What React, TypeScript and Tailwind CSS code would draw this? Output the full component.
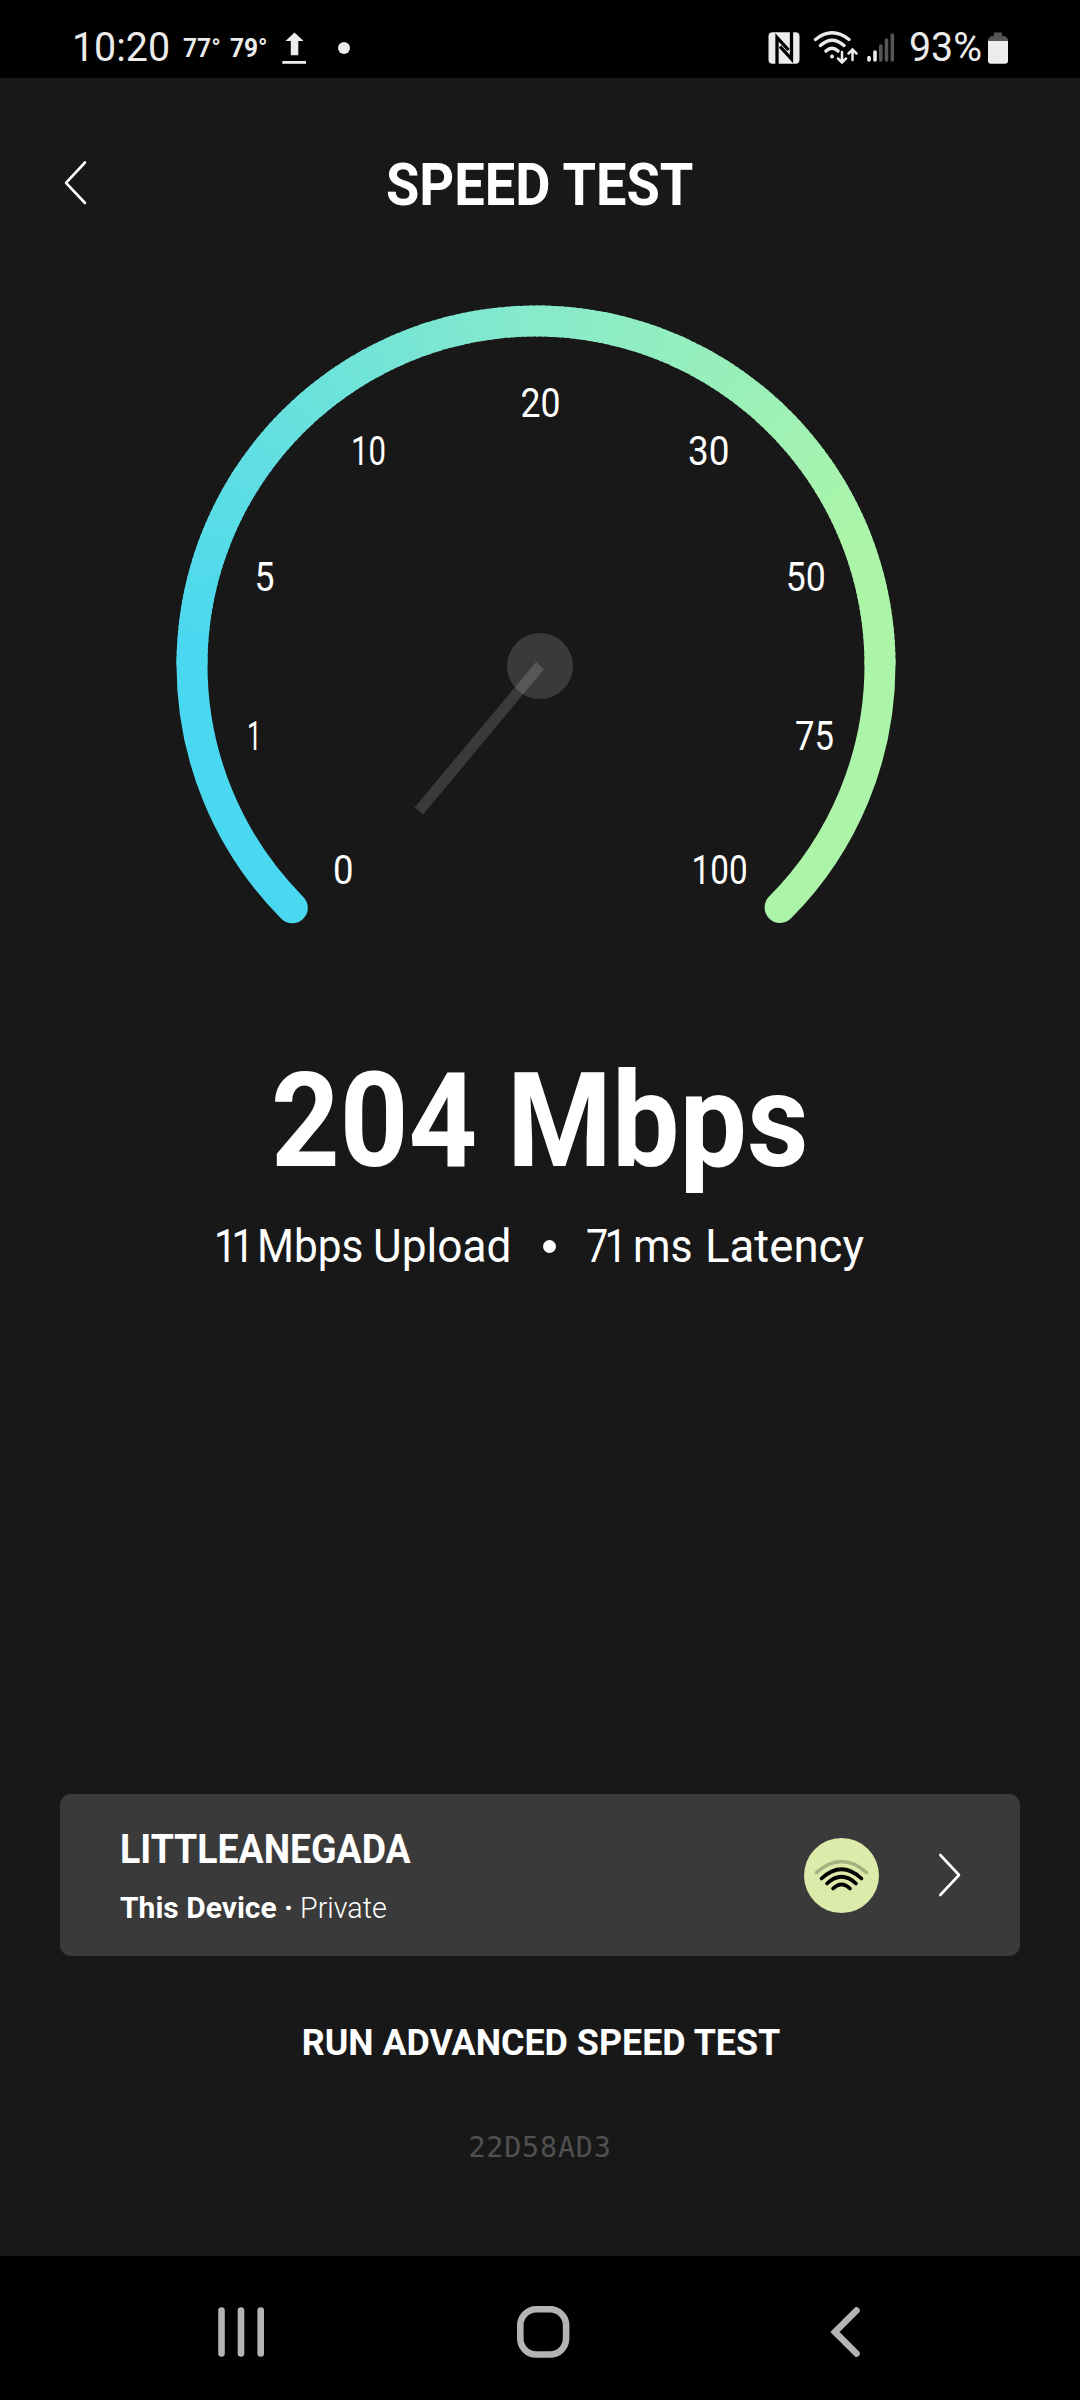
const GAUGE_LABELS = [
  { t: "0", x: 335, w: 16.5, y: 884 },
  { t: "1", x: 249, w: 10.5, y: 750 },
  { t: "5", x: 256.5, w: 16, y: 591 },
  { t: "10", x: 353, w: 31, y: 465 },
  { t: "20", x: 522.5, w: 36, y: 417 },
  { t: "30", x: 690, w: 37.5, y: 465 },
  { t: "50", x: 787.7, w: 36, y: 591 },
  { t: "75", x: 797, w: 35, y: 750 },
  { t: "100", x: 693.6, w: 52, y: 884 },
];

const CX = 536;
const CY = 665;
const R = 344;

const STOPS = [
  [74, 216, 240],
  [135, 234, 203],
  [172, 245, 168],
];

function sweepColor(deg: number) {
  // 180 is the left side, 0 the right side; the lower quadrants stay solid
  const t = Math.min(1, Math.max(0, (deg - 184) / 156));
  const i = t < 0.55 ? 0 : 1;
  const k = i === 0 ? t / 0.55 : (t - 0.55) / 0.45;
  const c = STOPS[i].map((v, n) => Math.round(v + (STOPS[i + 1][n] - v) * k));
  return `rgb(${c.join(",")})`;
}

function point(deg: number) {
  const a = (deg * Math.PI) / 180;
  return `${(CX + R * Math.cos(a)).toFixed(2)} ${(CY + R * Math.sin(a)).toFixed(2)}`;
}

function Gauge() {
  const segments = [];
  for (let d = 180; d < 360; d += 1) {
    segments.push(
      <path key={d} d={`M${point(d)}A${R} ${R} 0 0 1 ${point(Math.min(360, d + 1.4))}`} stroke={sweepColor(d + 0.5)} />,
    );
  }
  return (
    <svg viewBox="0 290 1080 650" className="block h-[650px] w-full shrink-0" fill="none">
      <g strokeWidth="31">
        <path d={`M${point(135.1)}A${R} ${R} 0 0 1 ${point(180.5)}`} stroke="#4ad8f0" strokeLinecap="round" />
        <path d={`M${point(359.8)}A${R} ${R} 0 0 1 ${point(404.8)}`} stroke="#acf5a8" strokeLinecap="round" />
        {segments}
      </g>
      <circle cx="540" cy="666" r="33" fill="#fff" fillOpacity=".15" />
      <path d="M536.1 661.9L543.9 669.3L423.2 814.4L414.5 807.4Z" fill="#fff" fillOpacity=".15" />
      {GAUGE_LABELS.map((l) => (
        <text
          key={l.t}
          x={l.x - 2}
          y={l.y}
          textLength={l.w + 4}
          lengthAdjust="spacingAndGlyphs"
          fill="#fff"
          className="font-['Roboto',sans-serif] text-[41px] font-[400]"
        >
          {l.t}
        </text>
      ))}
    </svg>
  );
}

function StatusBar() {
  return (
    <div className="flex h-[78px] shrink-0 items-start bg-black pl-[72px] text-[#ececec]">
      <span className="mt-[23px] w-[112px] origin-left scale-x-[0.96] text-[41px] leading-[48px]">10:20</span>
      <span className="mt-[33px] -ml-px w-[47px] origin-left scale-x-[0.95] text-[26px] leading-[31px] font-semibold">77°</span>
      <span className="mt-[33px] w-[52px] origin-left scale-x-[0.94] text-[26px] leading-[31px] font-bold">79°</span>
      <svg viewBox="282 30 70 36" className="mt-[30px] h-[36px] w-[70px]" fill="currentColor">
        <path d="M294.5 32.5L303.5 41H298.3V55.3H290.8V41H285.5Z" />
        <rect x="282.3" y="61" width="23.7" height="2.8" />
        <circle cx="344" cy="48" r="6" />
      </svg>
      <svg viewBox="764 24 146 48" className="mt-[24px] ml-[412px] h-[48px] w-[146px]" fill="none" stroke="currentColor">
        <rect x="768.5" y="32.3" width="31" height="31.4" rx="4" fill="currentColor" stroke="none" />
        <path d="M777 64V37.5L788.5 50M791.5 32V59L780 46.5" stroke="#000" strokeWidth="3.3" />
        <g strokeWidth="3.4" strokeLinecap="round">
          <path d="M815.5 39.5Q832 26 849 39.5M820.5 45.5Q832 35 844 45.5M826 51Q832 45.5 838 51" />
          <path d="M842 52V62M838 58.5L842 62.5L846 58.5M852.5 60V50M848.5 53.5L852.5 49.5L856.5 53.5" strokeWidth="2.5" />
          <circle cx="832" cy="56.5" r="2" fill="currentColor" stroke="none" />
        </g>
        <g strokeWidth="3.6" strokeLinecap="round">
          <path d="M869 57.5V60M875 52V60" />
          <path d="M880.8 46V60M886.5 40V60M892.3 35V60" stroke="#555" />
        </g>
      </svg>
      <span className="mt-[23px] -ml-px w-[78px] origin-left scale-x-[0.96] text-[41px] leading-[48px]">93%</span>
      <svg viewBox="987 30 22 36" className="mt-[30px] h-[36px] w-[22px]" fill="currentColor">
        <path d="M994 32.5H1002V36H1005L1008 39V42H988V39L991 36H994Z" fill="#555" />
        <path d="M988 41H1008V61Q1008 63.7 1005 63.7H991Q988 63.7 988 61Z" />
      </svg>
    </div>
  );
}

function WifiBadge() {
  return (
    <svg viewBox="804 1838 75 75" className="size-[75px]" fill="none" strokeLinecap="round" strokeWidth="3.6">
      <circle cx="841.5" cy="1875.5" r="37.5" fill="#dcebaa" />
      <path d="M816.5 1872.5Q841.5 1850.5 866.5 1872.5" stroke="#a6b181" />
      <path d="M821.5 1878.5Q841.5 1860 861.5 1878.5M827 1883.5Q841.5 1870 856 1883.5M833 1888.5Q841.5 1880 850 1888.5" stroke="#000" />
    </svg>
  );
}

export default function App() {
  return (
    <div className="flex h-[2400px] w-[1080px] flex-col overflow-hidden bg-[#181818] font-['Roboto',sans-serif] text-white">
      <StatusBar />
      <header className="flex h-[212px] shrink-0 items-start pl-[62px]">
        <svg viewBox="62 158 28 50" className="mt-[80px] h-[50px] w-[28px]" fill="none" stroke="#fff" strokeWidth="2.6" strokeLinecap="round" strokeLinejoin="round">
          <path d="M85 162.5L66 182.8L85 203" />
        </svg>
        <h1 className="mt-[72px] ml-[296px] origin-left scale-x-[0.918] text-[59px] leading-[70px] font-bold whitespace-nowrap">SPEED TEST</h1>
      </header>
      <Gauge />
      <main className="flex h-[854px] flex-col items-start">
        <div className="mt-[103px] ml-[271px] origin-left scale-x-[0.915] text-[131px] leading-[156px] font-bold whitespace-nowrap">
          204 Mbps
        </div>
        <div className="mt-[19px] flex items-center pl-[214px] text-[46.5px] leading-[56px] font-normal whitespace-nowrap">
          <p className="flex w-[329px]">
            <span className="w-[43px] origin-left scale-x-[0.87] tracking-[-6px]">11</span>
            <span className="w-[116px] origin-left scale-x-[0.91]">Mbps</span>
            <span className="origin-left scale-x-[0.95]">Upload</span>
          </p>
          <span className="size-[13px] rounded-full bg-white" />
          <p className="ml-[30px] flex">
            <span className="w-[47px] origin-left scale-x-[0.85] tracking-[-4px]">71</span>
            <span className="w-[72px] origin-left scale-x-[0.92]">ms</span>
            <span className="origin-left scale-x-[0.98]">Latency</span>
          </p>
        </div>
      </main>
      <section className="mx-[60px] flex h-[162px] shrink-0 items-center rounded-[11px] bg-[#3a3a3a] pl-[60px]">
        <div className="w-[684px]">
          <div className="origin-left scale-x-[0.912] text-[41px] leading-[48px] font-bold">LITTLEANEGADA</div>
          <div className="mt-[17px] flex text-[30px] leading-[36px]">
            <b className="w-[180px] font-bold whitespace-nowrap">This Device ·</b>
            <span className="origin-left scale-x-[0.955] font-light">Private</span>
          </div>
        </div>
        <WifiBadge />
        <svg viewBox="937 1850 28 50" className="ml-[58px] h-[50px] w-[28px]" fill="none" stroke="#fff" strokeWidth="2.6" strokeLinecap="round" strokeLinejoin="round">
          <path d="M940.3 1855L959 1875L940.3 1895" />
        </svg>
      </section>
      <div className="mt-[66px] scale-x-[0.996] pl-[2px] text-center text-[36px] leading-[42px] font-bold">RUN ADVANCED SPEED TEST</div>
      <div className="mt-[64px] text-center font-['DejaVu_Sans_Mono',monospace] text-[28.4px] leading-[40px] tracking-[0.8px] text-[#505050]">
        22D58AD3
      </div>
      <nav className="mt-auto h-[144px] shrink-0 bg-black">
        <svg viewBox="0 2256 1080 144" className="h-[144px] w-full" fill="none" stroke="#b4b4b4" strokeWidth="6.6" strokeLinecap="round">
          <path d="M221.5 2310.5V2353.5M241 2310.5V2353.5M260.7 2310.5V2353.5" />
          <rect x="520.3" y="2309.3" width="45.8" height="45.2" rx="16" />
          <path d="M856.5 2310.5L835 2332L856.5 2353.5" />
        </svg>
      </nav>
    </div>
  );
}
